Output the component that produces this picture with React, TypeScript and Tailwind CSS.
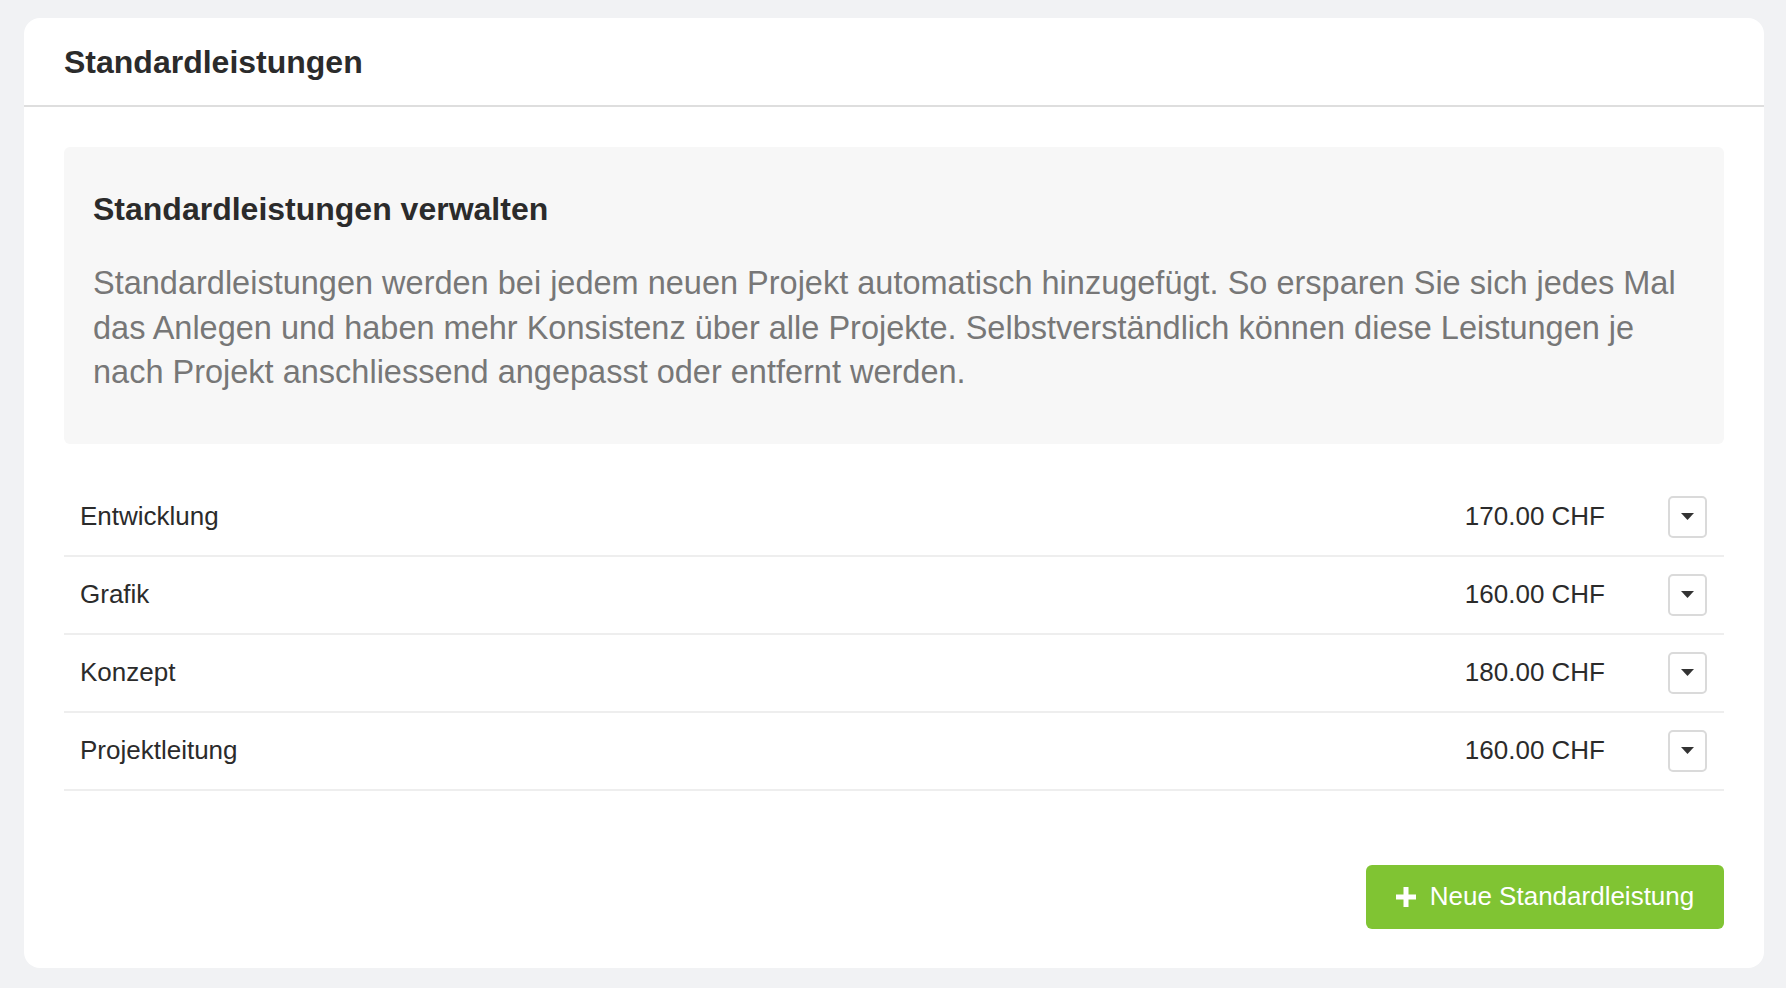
const items = [
  { name: "Entwicklung", price: "170.00 CHF" },
  { name: "Grafik", price: "160.00 CHF" },
  { name: "Konzept", price: "180.00 CHF" },
  { name: "Projektleitung", price: "160.00 CHF" },
];

function Caret() {
  return (
    <svg width="13" height="7" viewBox="0 0 13 7">
      <path d="M0 0h13L6.5 7z" fill="#333" />
    </svg>
  );
}

export default function App() {
  return (
    <div
      className="w-full h-screen bg-[#f1f2f4] pt-[18px] pl-[24px] pr-[22px]"
      style={{ fontFamily: '"Liberation Sans", Arial, sans-serif' }}
    >
      <div className="bg-white rounded-[16px] h-[950px] flex flex-col">
        <div className="h-[89px] flex items-center px-[40px] border-b-2 border-[#dedede]">
          <h1 className="text-[32px] font-bold text-[#2b2b2b]">Standardleistungen</h1>
        </div>

        <div className="px-[40px] pt-[40px]">
          <div className="bg-[#f7f7f7] rounded-[6px] px-[29px] pt-[40px] pb-[49px]">
            <h2 className="text-[32px] font-bold text-[#2b2b2b] leading-[44px]">
              Standardleistungen verwalten
            </h2>
            <p className="mt-[30px] text-[32.5px] leading-[44.5px] text-[#777777]">
              Standardleistungen werden bei jedem neuen Projekt automatisch hinzugefügt. So ersparen Sie sich jedes Mal das Anlegen und haben mehr Konsistenz über alle Projekte. Selbstverständlich können diese Leistungen je nach Projekt anschliessend angepasst oder entfernt werden.
            </p>
          </div>

          <div className="mt-[35px]">
            {items.map((it) => (
              <div
                key={it.name}
                className="h-[78px] flex items-center border-b-2 border-[#eeeeee] pl-[16px] pr-[17px]"
              >
                <span className="flex-1 text-[26px] text-[#2b2b2b]">{it.name}</span>
                <span className="text-[26px] text-[#2b2b2b] mr-[63px]">{it.price}</span>
                <button
                  type="button"
                  className="w-[39px] h-[42px] border-2 border-[#dadada] rounded-[5px] flex items-center justify-center bg-white"
                >
                  <Caret />
                </button>
              </div>
            ))}
          </div>

          <div className="flex justify-end mt-[74px]">
            <button
              type="button"
              className="h-[64px] w-[358px] bg-[#80c433] rounded-[6px] text-white text-[26px] flex items-center justify-center gap-[14px]"
            >
              <svg width="20" height="20" viewBox="0 0 20 20">
                <path d="M7.5 0h5v7.5H20v5h-7.5V20h-5v-7.5H0v-5h7.5z" fill="#fff" />
              </svg>
              <span>Neue Standardleistung</span>
            </button>
          </div>
        </div>
      </div>
    </div>
  );
}
